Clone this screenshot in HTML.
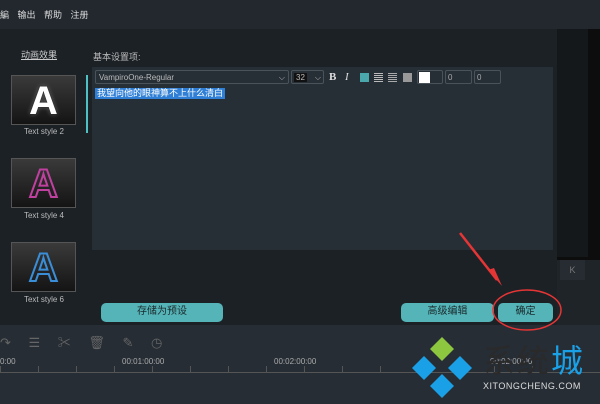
<!DOCTYPE html>
<html><head><meta charset="utf-8"><style>
*{margin:0;padding:0;box-sizing:border-box}
body{width:600px;height:404px;overflow:hidden;background:#1c2126;font-family:"Liberation Sans","Noto Sans CJK SC",sans-serif;position:relative;color:#ccc}
.a{position:absolute}
.btn{position:absolute;background:#55b4b8;border-radius:5px;color:#1a2a2c;font-size:10px;text-align:center;line-height:18px;height:19px}
.thumb{position:absolute;left:11px;width:65px;height:50px;border:1px solid #555;background:linear-gradient(#3a3a3a,#141414);text-align:center;font:900 40px/50px "Liberation Sans",sans-serif}
.lbl{position:absolute;left:0;width:88px;text-align:center;font-size:8px;color:#bbb}
.box{position:absolute;border:1px solid #4a525a;border-radius:2px;height:14px;top:70px}
</style></head><body>
<div class="a" style="left:0;top:0;width:600px;height:29px;background:#22282e"></div>
<div class="a" style="left:0;top:8px;font-size:9px;color:#ddd;word-spacing:6px">編 输出 帮助 注册</div>
<div class="a" style="left:557px;top:29px;width:43px;height:296px;background:#0d0d0d"></div>
<div class="a" style="left:557px;top:29px;width:31px;height:228px;background:#15181b"></div>
<div class="a" style="left:557px;top:260px;width:43px;height:65px;background:#1f2429"></div>
<div class="a" style="left:560px;top:260px;width:25px;height:20px;background:#262c32;color:#777;font-size:9px;text-align:center;line-height:20px">K</div>
<div class="a" style="left:21px;top:48px;font-size:9px;color:#ccc;text-decoration:underline">动画效果</div>
<div class="a" style="left:93px;top:50px;font-size:9px;color:#bbb">基本设置项:</div>
<div class="a" style="left:86px;top:75px;width:2px;height:58px;background:#4fc0c4"></div>
<div class="thumb" style="top:75px;color:#fff;text-shadow:0 0 2px #000,0 0 4px #888">A</div>
<div class="lbl" style="top:127px">Text style 2</div>
<div class="thumb" style="top:158px;color:transparent;-webkit-text-stroke:2px #c040a0">A</div>
<div class="lbl" style="top:211px">Text style 4</div>
<div class="thumb" style="top:242px;color:transparent;-webkit-text-stroke:2px #3a8ed8">A</div>
<div class="lbl" style="top:295px">Text style 6</div>
<div class="a" style="left:92px;top:67px;width:461px;height:183px;background:#262e36"></div>
<div class="box" style="left:95px;width:194px;font-size:8px;color:#bbb;padding:2px 3px">VampiroOne-Regular<span style="float:right">⌵</span></div>
<div class="box" style="left:291px;width:33px;font-size:8px;color:#bbb;padding:2px 2px"><span style="background:#111;padding:0 2px">32</span><span style="float:right">⌵</span></div>
<div class="a" style="left:329px;top:71px;font:bold 11px 'Liberation Serif',serif;color:#ddd">B</div>
<div class="a" style="left:345px;top:71px;font:italic 11px 'Liberation Serif',serif;color:#ddd">I</div>
<div class="a" style="left:360px;top:73px;width:9px;height:9px;background:#4aa8ac"></div>
<div class="a" style="left:374px;top:73px;width:9px;height:9px;background:repeating-linear-gradient(#bbb 0 1px,transparent 1px 2px)"></div>
<div class="a" style="left:388px;top:73px;width:9px;height:9px;background:repeating-linear-gradient(#aaa 0 1px,transparent 1px 2px)"></div>
<div class="a" style="left:403px;top:73px;width:9px;height:9px;background:#999"></div>
<div class="box" style="left:417px;width:26px"><div style="margin:1px;width:11px;height:11px;background:#fff"></div></div>
<div class="box" style="left:445px;width:27px;font-size:8px;color:#aaa;padding:2px">0</div>
<div class="box" style="left:474px;width:27px;font-size:8px;color:#aaa;padding:2px">0</div>
<div class="a" style="left:95px;top:88px;background:#2f7fd6;color:#fff;font-size:9px;padding:0 2px;line-height:11px">我望向他的眼神算不上什么清白</div>
<div class="btn" style="left:101px;top:303px;width:122px">存储为预设</div>
<div class="btn" style="left:401px;top:303px;width:93px">高级编辑</div>
<div class="btn" style="left:498px;top:303px;width:55px">确定</div>
<div class="a" style="left:0;top:325px;width:600px;height:79px;background:#262d35"></div>
<div class="a" style="left:0;top:332px;font-size:13px;color:#666;word-spacing:14px">↷ ☰ ✂ 🗑 ✎ ◷</div>
<div class="a" style="left:0;top:357px;width:600px;font-size:8px;color:#aaa"><span class="a" style="left:0">0:00</span><span class="a" style="left:122px">00:01:00:00</span><span class="a" style="left:274px">00:02:00:00</span><span class="a" style="left:490px">00:02:00:00</span></div>
<div class="a" style="left:0;top:372px;width:600px;height:1px;background:#555"></div>
<div class="a" style="left:0;top:366px;width:600px;height:6px;background:repeating-linear-gradient(90deg,#555 0 1px,transparent 1px 38px)"></div>
<div class="a" style="left:483px;top:336px;font-size:32px;color:#2a2a2a;letter-spacing:2px">系统<span style="color:#1aa0e6">城</span></div>
<svg class="a" style="left:0;top:0" width="600" height="404">
<line x1="460" y1="233" x2="497" y2="280" stroke="#e53535" stroke-width="2.5"/>
<polygon points="488,270 502,286 494,268" fill="#e53535"/>
<ellipse cx="527" cy="310" rx="34" ry="20" fill="none" stroke="#e53535" stroke-width="1.5"/>
<polygon points="442,337 454,349 442,361 430,349" fill="#8dc63f"/>
<polygon points="424,356 436,368 424,380 412,368" fill="#1aa0e6"/>
<polygon points="460,356 472,368 460,380 448,368" fill="#1aa0e6"/>
<polygon points="442,374 454,386 442,398 430,386" fill="#1aa0e6"/>
</svg>
<div class="a" style="left:483px;top:381px;font-size:9px;color:#ddd;letter-spacing:.5px">XITONGCHENG.COM</div>
</body></html>
